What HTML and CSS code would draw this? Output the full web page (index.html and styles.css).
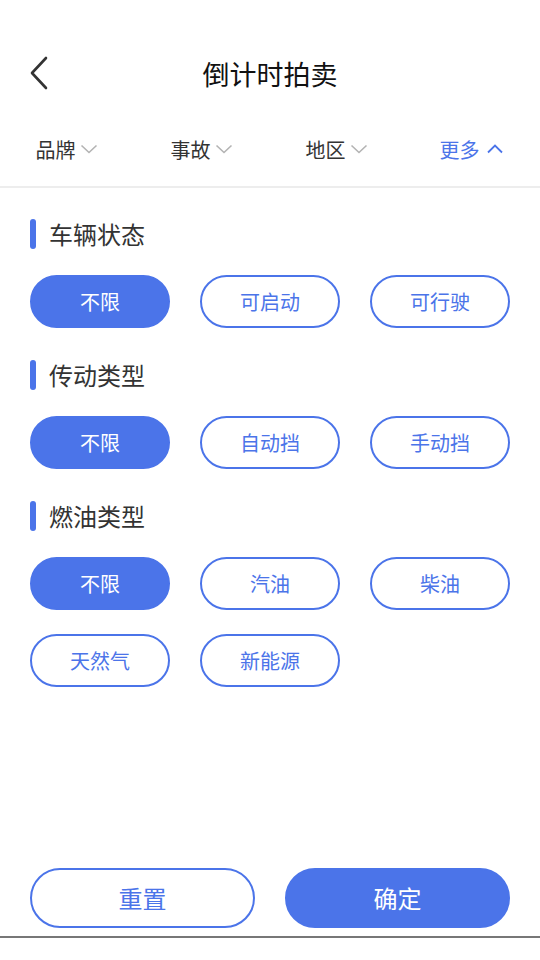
FILE: index.html
```html
<!DOCTYPE html>
<html lang="zh-CN">
<head>
<meta charset="utf-8">
<title>倒计时拍卖</title>
<link rel="stylesheet" href="styles.css">
</head>
<body>
<div class="page">
  <header class="nav">
    <svg class="back" width="20" height="34" viewBox="0 0 20 34"><path d="M17 2 L3 17 L17 32" fill="none" stroke="#333" stroke-width="2.6" stroke-linecap="round" stroke-linejoin="round"/></svg>
    <h1 class="title">倒计时拍卖</h1>
  </header>
  <nav class="tabs">
    <div class="tab"><span>品牌</span><svg class="chev" width="18" height="10" viewBox="0 0 18 10"><path d="M1.5 1.5 L9 8.5 L16.5 1.5" fill="none" stroke="#b3b3b3" stroke-width="1.6"/></svg></div>
    <div class="tab"><span>事故</span><svg class="chev" width="18" height="10" viewBox="0 0 18 10"><path d="M1.5 1.5 L9 8.5 L16.5 1.5" fill="none" stroke="#b3b3b3" stroke-width="1.6"/></svg></div>
    <div class="tab"><span>地区</span><svg class="chev" width="18" height="10" viewBox="0 0 18 10"><path d="M1.5 1.5 L9 8.5 L16.5 1.5" fill="none" stroke="#b3b3b3" stroke-width="1.6"/></svg></div>
    <div class="tab active"><span>更多</span><svg class="chev" width="18" height="10" viewBox="0 0 18 10"><path d="M2 8.5 L9 1.5 L16 8.5" fill="none" stroke="#4b74e9" stroke-width="1.8"/></svg></div>
  </nav>
  <main class="content">
    <section class="group">
      <h2 class="group-title">车辆状态</h2>
      <div class="options">
        <button class="opt selected">不限</button>
        <button class="opt">可启动</button>
        <button class="opt">可行驶</button>
      </div>
    </section>
    <section class="group">
      <h2 class="group-title">传动类型</h2>
      <div class="options">
        <button class="opt selected">不限</button>
        <button class="opt">自动挡</button>
        <button class="opt">手动挡</button>
      </div>
    </section>
    <section class="group">
      <h2 class="group-title">燃油类型</h2>
      <div class="options">
        <button class="opt selected">不限</button>
        <button class="opt">汽油</button>
        <button class="opt">柴油</button>
        <button class="opt">天然气</button>
        <button class="opt">新能源</button>
      </div>
    </section>
  </main>
  <footer class="footer">
    <div class="actions">
      <button class="action reset">重置</button>
      <button class="action confirm">确定</button>
    </div>
    <div class="bottom-line"></div>
  </footer>
</div>
</body>
</html>
```
FILE: styles.css
```css
* { box-sizing: border-box; }
html, body { margin: 0; padding: 0; background: #fff; }
body {
  font-family: "Noto Sans CJK SC", "Noto Sans", sans-serif;
  color: #333;
}
.page {
  width: 540px;
  height: 960px;
  display: flex;
  flex-direction: column;
}
.nav {
  margin-top: 40px;
  height: 66px;
  display: flex;
  align-items: center;
  justify-content: center;
  position: relative;
}
.back {
  position: absolute;
  left: 29px;
  top: 16px;
}
.title {
  margin: 0;
  font-size: 27px;
  font-weight: 400;
  color: #111;
  line-height: 1;
}
.tabs {
  margin-top: 6px;
  height: 76px;
  display: grid;
  grid-template-columns: repeat(4, 1fr);
  border-bottom: 2px solid #ededed;
}
.tab {
  display: flex;
  align-items: center;
  justify-content: center;
  gap: 4px;
  font-size: 20px;
  color: #333;
  padding-right: 2px;
}
.tab.active { color: #4b74e9; }
.tab.active .chev { margin-left: 2px; }
.content {
  flex: 1;
  padding: 31px 30px 0;
}
.group + .group { margin-top: 32px; }
.group-title {
  margin: 0 0 26px;
  height: 30px;
  display: flex;
  align-items: center;
  gap: 13px;
  font-size: 24px;
  font-weight: 400;
  color: #333;
  line-height: 1;
}
.group-title::before {
  content: "";
  width: 6px;
  height: 30px;
  border-radius: 3px;
  background: #4b74e9;
}
.options {
  display: grid;
  grid-template-columns: repeat(3, 140px);
  column-gap: 30px;
  row-gap: 24px;
}
.opt {
  height: 53px;
  border: 2px solid #4b74e9;
  border-radius: 27px;
  background: #fff;
  color: #4b74e9;
  font-family: inherit;
  font-size: 20px;
  padding: 0;
}
.opt.selected {
  background: #4b74e9;
  color: #fff;
}
.actions {
  display: grid;
  grid-template-columns: 225px 225px;
  column-gap: 30px;
  padding: 0 30px;
}
.action {
  height: 60px;
  border-radius: 30px;
  border: 2px solid #4b74e9;
  font-family: inherit;
  font-size: 24px;
  padding: 0 0 2px;
}
.reset { background: #fff; color: #4b74e9; }
.confirm { background: #4b74e9; color: #fff; }
.bottom-line {
  margin-top: 8px;
  height: 2px;
  background: #777;
  margin-bottom: 22px;
}
```
